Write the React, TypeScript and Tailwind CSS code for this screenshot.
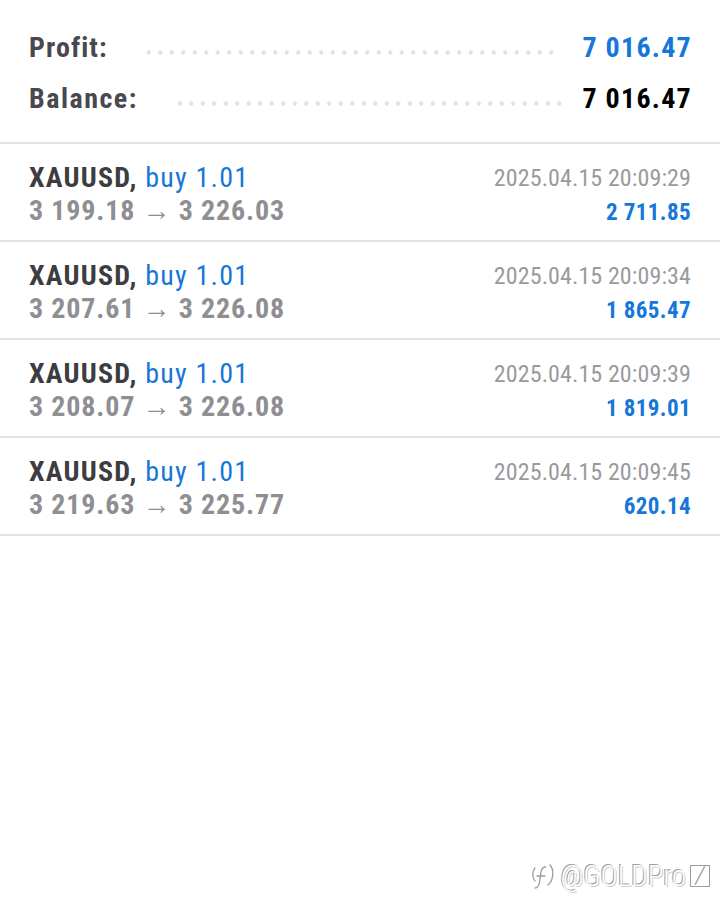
import React from 'react';

const trades = [
  { open: '3 199.18', close: '3 226.03', time: '2025.04.15 20:09:29', profit: '2 711.85' },
  { open: '3 207.61', close: '3 226.08', time: '2025.04.15 20:09:34', profit: '1 865.47' },
  { open: '3 208.07', close: '3 226.08', time: '2025.04.15 20:09:39', profit: '1 819.01' },
  { open: '3 219.63', close: '3 225.77', time: '2025.04.15 20:09:45', profit: '620.14' },
];

const Dots = ({ className }: { className: string }) => (
  <div
    className={`flex-1 h-[5px] mt-[10px] bg-[radial-gradient(circle,#e2e2e2_2px,transparent_2.5px)] bg-[length:11.5px_5px] bg-repeat-x ${className}`}
  />
);

const SummaryRow = ({ label, value, labelClass, valueClass, dotsClass }: { label: string; value: string; labelClass: string; valueClass: string; dotsClass: string }) => (
  <div className="flex items-center h-[51px]">
    <span className={`text-[28px] font-bold text-[#48484e] leading-none ${labelClass}`}>{label}</span>
    <Dots className={dotsClass} />
    <span className={`text-[28px] font-bold leading-none tracking-[1.25px] -mr-[1px] ${valueClass}`}>{value}</span>
  </div>
);

export default function App() {
  return (
    <div className="relative w-[720px] h-[920px] bg-white overflow-hidden font-['Roboto',sans-serif] [font-stretch:75%]">
      {/* Account summary */}
      <div className="px-[29px] pt-[22px] pb-[18px] border-b-2 border-[#e3e3e3]">
        <SummaryRow label="Profit:" value="7 016.47" labelClass="tracking-[1.1px]" valueClass="text-[#1677d8]" dotsClass="ml-[35px] mr-[24px]" />
        <SummaryRow label="Balance:" value="7 016.47" labelClass="tracking-[1.5px]" valueClass="text-black" dotsClass="ml-[36px] mr-[20px]" />
      </div>

      {/* Closed positions */}
      {trades.map((t) => (
        <div key={t.time} className="flex justify-between h-[98px] px-[29px] pt-[17px] border-b-2 border-[#e3e3e3]">
          <div className="flex flex-col">
            <div className="text-[28px] leading-[33px] tracking-[1.2px]">
              <span className="font-bold text-[#3c3c41]">XAUUSD, </span>
              <span className="text-[#1677d8]">buy 1.01</span>
            </div>
            <div className="text-[28px] leading-[33px] font-bold text-[#8e8e93] tracking-[0.85px]">
              {t.open} <span className="font-normal">→</span> {t.close}
            </div>
          </div>
          <div className="flex flex-col items-end">
            <div className="text-[24px] leading-[33px] text-[#9a9a9e] mt-[1px] tracking-[0.1px]">{t.time}</div>
            <div className="text-[23px] leading-[33px] font-bold text-[#1677d8] mt-[1px] tracking-[0.4px]">{t.profit}</div>
          </div>
        </div>
      ))}

      {/* Watermark */}
      <div className="absolute right-[10px] bottom-[22px] flex items-center gap-[4px] text-[29px] font-light text-white [text-shadow:-1px_-1px_0_#9c9c9c,1px_1px_0_#d0d0d0]">
        <svg width="28" height="32" viewBox="0 0 28 32" fill="none" stroke="#9c9c9c" strokeWidth="1.3" strokeLinecap="round">
          <path d="M6 28c3 0 4-2 4.5-6l1.5-10c.6-3 2-5 4.5-5" />
          <path d="M8 16h8" />
          <path d="M21 5c4 4 4 15-2 20" />
          <path d="M6 8c-3 3-3 10 0 13" />
        </svg>
        <span>@GOLDPro</span>
        <span className="inline-block w-[20px] h-[22px] border border-[#9c9c9c] text-[16px] leading-[20px] text-center text-[#9c9c9c] [text-shadow:none]">╱</span>
      </div>
    </div>
  );
}
